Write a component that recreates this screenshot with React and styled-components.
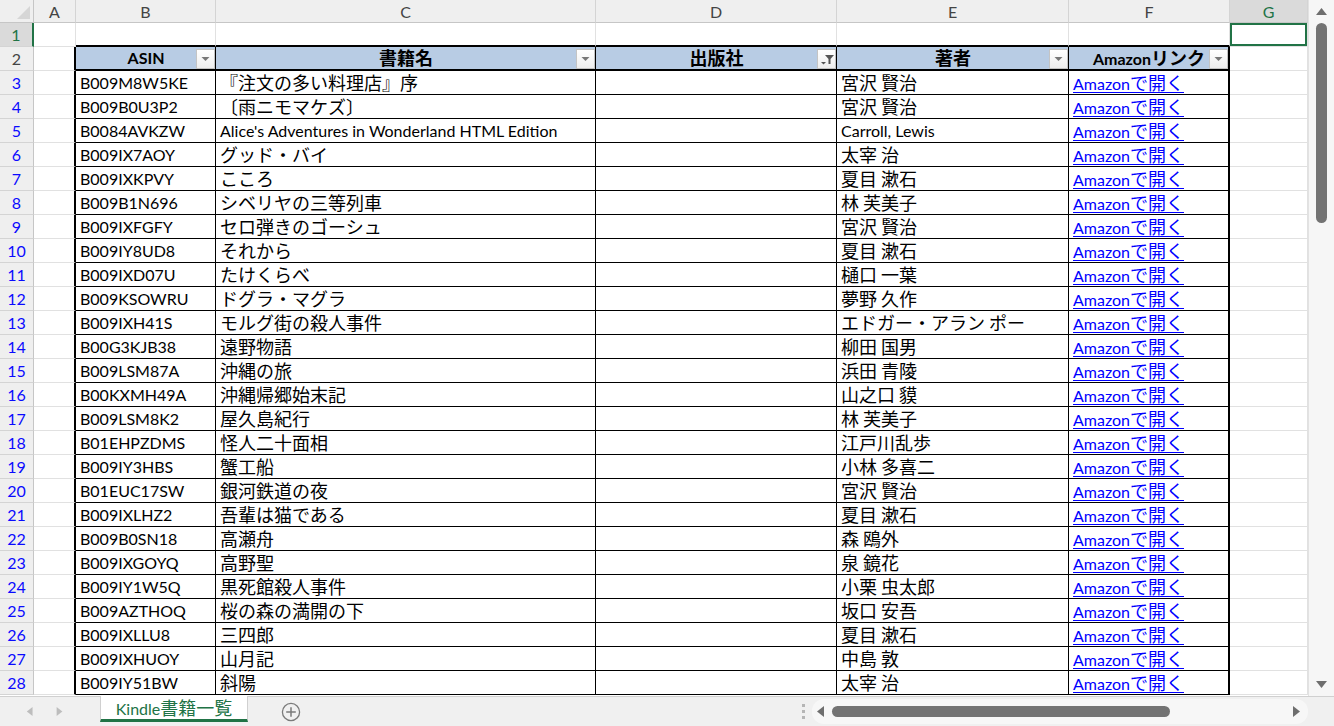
import React from 'react'
import styled, { createGlobalStyle } from 'styled-components'

const GlobalStyle = createGlobalStyle`
    html, body {
        margin:0;
        padding:0;
        background:#fff;
        overflow:hidden;
    }
    body {
        font-family:'Lato', 'Noto Sans CJK JP', sans-serif;
    }
`

const GREEN = '#217346'
const GRID = '1px solid #e1e1e1'
const INK = '1px solid #000'
const THICK = '2px solid #000'

const cols = [
    { key: 'A', w: 42 },
    { key: 'B', w: 140 },
    { key: 'C', w: 380 },
    { key: 'D', w: 241 },
    { key: 'E', w: 232 },
    { key: 'F', w: 161 },
    { key: 'G', w: 78 },
]

const books = [
    ['B009M8W5KE', '『注文の多い料理店』序', '宮沢 賢治'],
    ['B009B0U3P2', '〔雨ニモマケズ〕', '宮沢 賢治'],
    ['B0084AVKZW', "Alice's Adventures in Wonderland HTML Edition", 'Carroll, Lewis'],
    ['B009IX7AOY', 'グッド・バイ', '太宰 治'],
    ['B009IXKPVY', 'こころ', '夏目 漱石'],
    ['B009B1N696', 'シベリヤの三等列車', '林 芙美子'],
    ['B009IXFGFY', 'セロ弾きのゴーシュ', '宮沢 賢治'],
    ['B009IY8UD8', 'それから', '夏目 漱石'],
    ['B009IXD07U', 'たけくらべ', '樋口 一葉'],
    ['B009KSOWRU', 'ドグラ・マグラ', '夢野 久作'],
    ['B009IXH41S', 'モルグ街の殺人事件', 'エドガー・アラン ポー'],
    ['B00G3KJB38', '遠野物語', '柳田 国男'],
    ['B009LSM87A', '沖縄の旅', '浜田 青陵'],
    ['B00KXMH49A', '沖縄帰郷始末記', '山之口 貘'],
    ['B009LSM8K2', '屋久島紀行', '林 芙美子'],
    ['B01EHPZDMS', '怪人二十面相', '江戸川乱歩'],
    ['B009IY3HBS', '蟹工船', '小林 多喜二'],
    ['B01EUC17SW', '銀河鉄道の夜', '宮沢 賢治'],
    ['B009IXLHZ2', '吾輩は猫である', '夏目 漱石'],
    ['B009B0SN18', '高瀬舟', '森 鴎外'],
    ['B009IXGOYQ', '高野聖', '泉 鏡花'],
    ['B009IY1W5Q', '黒死館殺人事件', '小栗 虫太郎'],
    ['B009AZTHOQ', '桜の森の満開の下', '坂口 安吾'],
    ['B009IXLLU8', '三四郎', '夏目 漱石'],
    ['B009IXHUOY', '山月記', '中島 敦'],
    ['B009IY51BW', '斜陽', '太宰 治'],
]

const headers = ['ASIN', '書籍名', '出版社', '著者', 'Amazonリンク']

const Window = styled('div')`
    width:1334px;
    height:726px;
    display:flex;
    flex-direction:column;
    overflow:hidden;
    color:#000;
`
const Main = styled('div')`
    display:flex;
    height:696px;
    overflow:hidden;
`
const Grid = styled('div')`
    width:1308px;
    display:flex;
    flex-direction:column;
    flex:none;
`
const ColHeadRow = styled('div')`
    display:flex;
    height:23px;
    flex:none;
`
const Corner = styled('div')`
    width:34px;
    box-sizing:border-box;
    background:#efefef;
    border-right:1px solid #c6c6c6;
    border-bottom:1px solid #c6c6c6;
    display:flex;
    align-items:flex-end;
    justify-content:flex-end;
    padding:0 3px 3px 0;
`
const ColHead = styled('div')`
    width:${p => p.$w}px;
    flex:none;
    box-sizing:border-box;
    background:${p => p.$sel ? '#dadada' : '#efefef'};
    color:${p => p.$sel ? GREEN : '#444'};
    border-right:1px solid #d4d4d4;
    border-bottom:1px solid #c6c6c6;
    display:flex;
    align-items:center;
    justify-content:center;
    font-size:16px;
`
const Row = styled('div')`
    display:flex;
    height:24px;
    flex:none;
`
const RowHead = styled('div')`
    width:34px;
    flex:none;
    box-sizing:border-box;
    background:${p => p.$sel ? '#dadada' : '#efefef'};
    color:${p => p.$color};
    border-right:${p => p.$sel ? `2px solid ${GREEN}` : '1px solid #c6c6c6'};
    border-bottom:1px solid #d4d4d4;
    display:flex;
    align-items:center;
    justify-content:center;
    font-size:16px;
`
const Cell = styled('div')`
    width:${p => p.$w}px;
    flex:none;
    box-sizing:border-box;
    position:relative;
    border-right:${p => p.$br || GRID};
    border-bottom:${p => p.$bb || GRID};
    background:${p => p.$bg || 'transparent'};
    box-shadow:${p => p.$sel ? `inset 0 0 0 2px ${GREEN}` : 'none'};
    padding:0 3px 0 4px;
    display:flex;
    align-items:center;
    justify-content:${p => p.$center ? 'center' : 'flex-start'};
    font-size:16px;
    font-weight:${p => p.$bold ? 700 : 400};
    white-space:nowrap;
`
const Line = styled('span')`
    line-height:20px;
    white-space:pre;
`
const Jp = styled('span')`
    display:inline-block;
    font-family:'Noto Sans CJK JP', sans-serif;
    font-size:18px;
    line-height:20px;
`
const Link = styled('span')`
    color:#0000ff;
    text-decoration:underline;
    text-underline-offset:2px;
    span{
        text-decoration:underline;
        text-underline-offset:2px;
    }
`
const FilterButton = styled('div')`
    position:absolute;
    right:0;
    top:2px;
    width:19px;
    height:20px;
    box-sizing:border-box;
    border:1px solid #c4c4c4;
    background:linear-gradient(#ffffff, #eeeeee);
    display:flex;
    align-items:center;
    justify-content:center;
`
const VScroll = styled('div')`
    width:26px;
    flex:none;
    background:#f6f6f6;
    border-left:1px solid #e2e2e2;
    box-sizing:border-box;
    display:flex;
    flex-direction:column;
    align-items:center;
    padding-top:7px;
`
const VThumb = styled('div')`
    width:11px;
    height:200px;
    margin-top:5px;
    border-radius:6px;
    background:#737373;
`
const VSpacer = styled('div')`
    flex:1;
`
const BottomBar = styled('div')`
    height:30px;
    flex:none;
    box-sizing:border-box;
    display:flex;
    align-items:stretch;
    background:#f0f0f0;
    border-top:1px solid #d0d0d0;
`
const Nav = styled('div')`
    width:100px;
    display:flex;
    align-items:center;
    gap:20px;
    padding-left:26px;
    box-sizing:border-box;
`
const Tab = styled('div')`
    width:148px;
    margin-top:-1px;
    box-sizing:border-box;
    background:#fff;
    border-left:1px solid #d0d0d0;
    border-right:1px solid #d0d0d0;
    border-bottom:3px solid ${GREEN};
    height:26px;
    display:flex;
    align-items:center;
    justify-content:center;
    color:${GREEN};
    font-size:16px;
`
const AddSheet = styled('div')`
    margin-left:33px;
    display:flex;
    align-items:center;
`
const Spacer = styled('div')`
    flex:1;
`
const Splitter = styled('div')`
    width:14px;
    display:flex;
    flex-direction:column;
    align-items:center;
    justify-content:center;
    gap:3px;
    margin-right:2px;
    span{
        width:3px;
        height:3px;
        background:#b5b5b5;
    }
`
const HScroll = styled('div')`
    width:496px;
    display:flex;
    align-items:center;
    padding:0 6px 0 4px;
    box-sizing:border-box;
    gap:5px;
    background:#f7f7f7;
    border-radius:12px;
    margin:2px 0;
`
const HThumb = styled('div')`
    width:338px;
    height:11px;
    border-radius:6px;
    background:#737373;
`
const HSpacer = styled('div')`
    flex:1;
`

// latin runs stay at cell size, japanese runs get the wider cjk face
const CJK = /([\u3000-\u9fff\uff00-\uffef]+)/
const Text = ({ children }) => {
    if (!children) return null
    return (
        <Line>
            {children.split(CJK).filter(Boolean).map((part, i) =>
                CJK.test(part) ? <Jp key={i}>{part}</Jp> : <React.Fragment key={i}>{part}</React.Fragment>
            )}
        </Line>
    )
}

const Tri = ({ dir, color = '#707070', size = 11 }) => {
    const pts = {
        up: '0,8 5.5,1 11,8',
        down: '0,2 5.5,9 11,2',
        left: '8,0 1,5.5 8,11',
        right: '2,0 9,5.5 2,11',
    }[dir]
    return (
        <svg width={size} height={size} viewBox="0 0 11 11">
            <polygon points={pts} fill={color} />
        </svg>
    )
}

const Filter = ({ active }) => (
    <FilterButton>
        {active ? (
            <svg width="17" height="18" viewBox="0 0 17 18">
                <polygon points="7,5 16,5 12.5,9 12.5,14 10.5,14 10.5,9" fill="#555" />
                <polygon points="3,12 8,12 5.5,14.5" fill="#555" />
            </svg>
        ) : (
            <svg width="9" height="6" viewBox="0 0 9 6">
                <polygon points="0.5,1 8.5,1 4.5,5" fill="#777" />
            </svg>
        )}
    </FilterButton>
)

const tableBorder = (ci, ri) => {
    // ci: column index 0..6, ri: row number
    const inTable = ri >= 2 && ci >= 1 && ci <= 5
    let br = GRID
    let bb = GRID
    if (ri >= 2 && ci === 0) br = THICK
    if (inTable) {
        br = ci === 5 ? THICK : INK
        bb = ri === 2 ? THICK : INK
    }
    if (ri === 1 && ci >= 1 && ci <= 5) bb = THICK
    return { br, bb }
}

const App = () => {
    return (
        <>
            <GlobalStyle />
            <Window>
                <Main>
                    <Grid>
                        <ColHeadRow>
                            <Corner>
                                <svg width="13" height="13" viewBox="0 0 13 13">
                                    <polygon points="13,0 13,13 0,13" fill="#d6d6d6" />
                                </svg>
                            </Corner>
                            {cols.map(c => (
                                <ColHead key={c.key} $w={c.w} $sel={c.key === 'G'}>{c.key}</ColHead>
                            ))}
                        </ColHeadRow>

                        <Row>
                            <RowHead $sel $color={GREEN}>1</RowHead>
                            {cols.map((c, ci) => {
                                const b = tableBorder(ci, 1)
                                return <Cell key={c.key} $w={c.w} $br={b.br} $bb={b.bb} $sel={c.key === 'G'} />
                            })}
                        </Row>

                        <Row>
                            <RowHead $color="#444">2</RowHead>
                            {cols.map((c, ci) => {
                                const b = tableBorder(ci, 2)
                                const isHead = ci >= 1 && ci <= 5
                                return (
                                    <Cell key={c.key} $w={c.w} $br={b.br} $bb={b.bb}
                                        $bg={isHead ? '#b8cce4' : undefined} $center $bold>
                                        {isHead && <Text>{headers[ci - 1]}</Text>}
                                        {isHead && <Filter active={c.key === 'D'} />}
                                    </Cell>
                                )
                            })}
                        </Row>

                        {books.map((bk, i) => {
                            const rn = i + 3
                            const vals = ['', bk[0], bk[1], '', bk[2], 'link', '']
                            return (
                                <Row key={rn}>
                                    <RowHead $color="#0a0aff">{rn}</RowHead>
                                    {cols.map((c, ci) => {
                                        const b = tableBorder(ci, rn)
                                        return (
                                            <Cell key={c.key} $w={c.w} $br={b.br} $bb={b.bb}>
                                                {vals[ci] === 'link'
                                                    ? <Link><Text>Amazonで開く</Text></Link>
                                                    : <Text>{vals[ci]}</Text>}
                                            </Cell>
                                        )
                                    })}
                                </Row>
                            )
                        })}
                    </Grid>
                    <VScroll>
                        <Tri dir="up" color="#6e6e6e" />
                        <VThumb />
                        <VSpacer />
                        <Tri dir="down" color="#6e6e6e" />
                        <div style={{ height: 6 }} />
                    </VScroll>
                </Main>

                <BottomBar>
                    <Nav>
                        <Tri dir="left" color="#bdbdbd" size={9} />
                        <Tri dir="right" color="#bdbdbd" size={9} />
                    </Nav>
                    <Tab><Text>Kindle書籍一覧</Text></Tab>
                    <AddSheet>
                        <svg width="20" height="20" viewBox="0 0 20 20">
                            <circle cx="10" cy="10" r="8.6" fill="none" stroke="#7a7a7a" strokeWidth="1.3" />
                            <path d="M10 5.2v9.6M5.2 10h9.6" stroke="#7a7a7a" strokeWidth="1.5" />
                        </svg>
                    </AddSheet>
                    <Spacer />
                    <Splitter><span /><span /><span /></Splitter>
                    <HScroll>
                        <Tri dir="left" color="#6e6e6e" />
                        <HThumb />
                        <HSpacer />
                        <Tri dir="right" color="#6e6e6e" />
                    </HScroll>
                    <div style={{ width: 26 }} />
                </BottomBar>
            </Window>
        </>
    )
}

export default App
